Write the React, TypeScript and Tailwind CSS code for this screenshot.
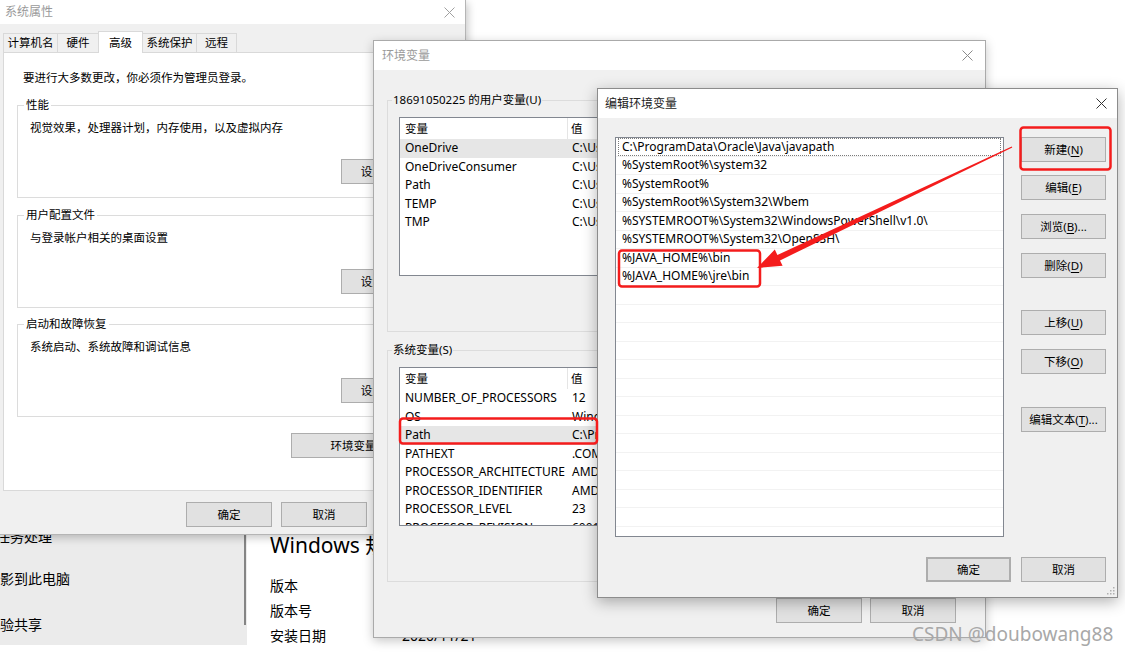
import React from "react";

const userVars: [string, string][] = [
  ["OneDrive", "C:\\Users\\18691\\OneDrive"],
  ["OneDriveConsumer", "C:\\Users\\18691\\OneDrive"],
  ["Path", "C:\\Users\\18691\\AppData\\Local"],
  ["TEMP", "C:\\Users\\18691\\AppData\\Local\\Temp"],
  ["TMP", "C:\\Users\\18691\\AppData\\Local\\Temp"],
];

const sysVars: [string, string][] = [
  ["NUMBER_OF_PROCESSORS", "12"],
  ["OS", "Windows_NT"],
  ["Path", "C:\\ProgramData\\Oracle\\Java"],
  ["PATHEXT", ".COM;.EXE;.BAT;.CMD"],
  ["PROCESSOR_ARCHITECTURE", "AMD64"],
  ["PROCESSOR_IDENTIFIER", "AMD64 Family 23"],
  ["PROCESSOR_LEVEL", "23"],
  ["PROCESSOR_REVISION", "6001"],
];

const paths = [
  "C:\\ProgramData\\Oracle\\Java\\javapath",
  "%SystemRoot%\\system32",
  "%SystemRoot%",
  "%SystemRoot%\\System32\\Wbem",
  "%SYSTEMROOT%\\System32\\WindowsPowerShell\\v1.0\\",
  "%SYSTEMROOT%\\System32\\OpenSSH\\",
  "%JAVA_HOME%\\bin",
  "%JAVA_HOME%\\jre\\bin",
];

function CloseX({ className }: { className: string }) {
  return (
    <svg width="11" height="11" viewBox="0 0 11 11" className={className}>
      <path d="M0.5 0.5L10.5 10.5M10.5 0.5L0.5 10.5" stroke="currentColor" strokeWidth="1" />
    </svg>
  );
}

function Btn({ children, className = "" }: { children: React.ReactNode; className?: string }) {
  return (
    <div
      className={`flex h-[25px] shrink-0 items-center justify-center border border-[#adadad] bg-[#e1e1e1] text-[11.5px] text-black ${className}`}
    >
      {children}
    </div>
  );
}

function U({ c }: { c: string }) {
  return <span className="underline underline-offset-2">{c}</span>;
}

// group box on the white tab page
function PageGroup({ label, text, mt }: { label: string; text: string; mt: string }) {
  return (
    <div className={`relative h-[93px] border border-[#dcdcdc] pl-[12px] pt-[14px] ${mt}`}>
      <span className="absolute -top-[9px] left-[6px] bg-white px-[2px] text-[11.5px] leading-[16px]">
        {label}
      </span>
      <div className="text-[11.5px] leading-[16px]">{text}</div>
      <Btn className="ml-[311px] mt-[23px] w-[85px]">设置(<U c="S" />)...</Btn>
    </div>
  );
}

function VarList({ rows, selected }: { rows: [string, string][]; selected: number }) {
  return (
    <div className="ml-[11px] mt-[16px] h-[159px] w-[560px] overflow-hidden border border-[#828790] bg-white text-[12px]">
      <div className="flex h-[21px] items-center">
        <div className="flex h-full w-[168px] items-center border-r border-[#e5e5e5] pl-[5px] text-[11.5px]">变量</div>
        <div className="pl-[3px] text-[11.5px]">值</div>
      </div>
      {rows.map(([k, v], i) => (
        <div key={k} className={`flex h-[18.5px] items-center ${i === selected ? "bg-[#e6e6e6]" : ""}`}>
          <div className="w-[169px] pl-[5px] whitespace-nowrap">{k}</div>
          <div className="pl-[3px] whitespace-nowrap">{v}</div>
        </div>
      ))}
    </div>
  );
}

function EnvGroup({ label, rows, selected, mt }: { label: string; rows: [string, string][]; selected: number; mt: string }) {
  return (
    <div className={`relative h-[232px] border border-[#dcdcdc] ${mt}`}>
      <span className="absolute -top-[9px] left-[4px] bg-[#f0f0f0] px-[1px] text-[11.5px] leading-[16px]">
        {label}
      </span>
      <VarList rows={rows} selected={selected} />
    </div>
  );
}

export default function App() {
  return (
    <div className="relative h-[654px] w-[1125px] overflow-hidden bg-white font-['Noto_Sans','Noto_Sans_CJK_SC',sans-serif] text-black">
      {/* BACKGROUND SETTINGS PAGE */}
      <div className="flex">
        <div className="flex h-[645px] w-[247px] bg-[#ebebeb]">
          <div className="flex w-[244px] flex-col text-[14px] leading-[20px]">
            <div className="-ml-[18px] mt-[527px] whitespace-nowrap">多任务处理</div>
            <div className="-ml-[14px] mt-[22px] whitespace-nowrap">投影到此电脑</div>
            <div className="-ml-[14px] mt-[26px] whitespace-nowrap">体验共享</div>
          </div>
          <div className="w-[2px]">
            <div className="mt-[535px] h-[90px] bg-[#858585]" />
          </div>
        </div>
        <div className="flex flex-col pl-[23px]">
          <div className="mt-[531px] text-[21px] leading-[28px] whitespace-nowrap">Windows 规格</div>
          <div className="mt-[17px] text-[14px] leading-[20px]">版本</div>
          <div className="mt-[5px] text-[14px] leading-[20px]">版本号</div>
          <div className="mt-[5px] flex text-[14px] leading-[20px]">
            <span className="w-[132px]">安装日期</span>
            <span>2020/11/21</span>
          </div>
        </div>
      </div>

      {/* 系统属性 */}
      <div className="absolute left-0 top-0 flex h-[535px] w-[466px] flex-col border-b border-r border-[#b5b5b5] bg-[#f0f0f0] shadow-[2px_3px_8px_rgba(0,0,0,0.22)]">
        <div className="flex h-[24px] shrink-0 items-center justify-between bg-white pl-[5px] pr-[10px]">
          <span className="text-[12px] text-[#9a9a9a]">系统属性</span>
          <CloseX className="text-[#a0a0a0]" />
        </div>
        <div className="mt-[7px] flex h-[21px] items-end pl-[3px] text-[11.5px]">
          <div className="flex h-[19px] w-[55px] items-center justify-center border border-b-0 border-[#d9d9d9]">计算机名</div>
          <div className="-ml-px flex h-[19px] w-[42px] items-center justify-center border border-b-0 border-[#d9d9d9]">硬件</div>
          <div className="relative z-10 -mb-px -ml-px flex h-[22px] w-[45px] items-start justify-center border border-b-0 border-[#d9d9d9] bg-white pt-[2px]">高级</div>
          <div className="-ml-px flex h-[19px] w-[55px] items-center justify-center border border-b-0 border-[#d9d9d9]">系统保护</div>
          <div className="-ml-px flex h-[19px] w-[41px] items-center justify-center border border-b-0 border-[#d9d9d9]">远程</div>
        </div>
        <div className="mx-[3px] h-[439px] shrink-0 border border-[#d9d9d9] bg-white px-[13px] pt-[17px]">
          <div className="ml-[6px] text-[11.5px] leading-[16px]">要进行大多数更改，你必须作为管理员登录。</div>
          <PageGroup label="性能" text="视觉效果，处理器计划，内存使用，以及虚拟内存" mt="mt-[19px]" />
          <PageGroup label="用户配置文件" text="与登录帐户相关的桌面设置" mt="mt-[17px]" />
          <PageGroup label="启动和故障恢复" text="系统启动、系统故障和调试信息" mt="mt-[16px]" />
          <Btn className="ml-[274px] mt-[16px] w-[150px]">环境变量(<U c="N" />)...</Btn>
        </div>
        <div className="mt-[11px] flex gap-[9px] pl-[186px]">
          <Btn className="w-[86px]">确定</Btn>
          <Btn className="w-[86px]">取消</Btn>
          <Btn className="w-[86px] text-[#888]">应用(A)</Btn>
        </div>
      </div>

      {/* 环境变量 */}
      <div className="absolute left-[373px] top-[40px] flex h-[598px] w-[613px] flex-col border border-[#aaaaaa] bg-[#f0f0f0] shadow-[0_3px_10px_rgba(0,0,0,0.22)]">
        <div className="flex h-[29px] shrink-0 items-center justify-between bg-white pl-[8px] pr-[12px]">
          <span className="text-[12px] text-[#9a9a9a]">环境变量</span>
          <CloseX className="text-[#8a8a8a]" />
        </div>
        <div className="flex flex-col px-[13px]">
          <EnvGroup label="18691050225 的用户变量(U)" rows={userVars} selected={0} mt="mt-[30px]" />
          <EnvGroup label="系统变量(S)" rows={sysVars} selected={2} mt="mt-[18px]" />
          <div className="ml-[389px] mt-[16px] flex gap-[8px]">
            <Btn className="w-[86px]">确定</Btn>
            <Btn className="w-[86px]">取消</Btn>
          </div>
        </div>
      </div>

      {/* 编辑环境变量 */}
      <div className="absolute left-[597px] top-[88px] flex h-[510px] w-[521px] flex-col border border-[#8c8c8c] bg-[#f0f0f0] shadow-[0_4px_14px_rgba(0,0,0,0.3)]">
        <div className="flex h-[29px] shrink-0 items-center justify-between bg-white pl-[7px] pr-[10px]">
          <span className="text-[12px] text-[#222]">编辑环境变量</span>
          <CloseX className="text-[#333]" />
        </div>
        <div className="flex pl-[17px] pt-[19px]">
          <div className="h-[400px] w-[389px] shrink-0 overflow-hidden border border-[#828790] bg-white text-[12px]">
            {Array.from({ length: 22 }).map((_, i) => (
              <div key={i} className="relative flex h-[18.5px] items-center border-b border-[#f2f2f2] pl-[6px] whitespace-nowrap">
                {i === 0 && <span className="absolute inset-x-[2px] inset-y-0 border border-dotted border-[#7a7a7a]" />}
                {paths[i] ?? ""}
              </div>
            ))}
          </div>
          <div className="ml-[17px] flex flex-col">
            <Btn className="w-[85px]">新建(<U c="N" />)</Btn>
            <Btn className="mt-[13px] w-[85px]">编辑(<U c="E" />)</Btn>
            <Btn className="mt-[14px] w-[85px]">浏览(<U c="B" />)...</Btn>
            <Btn className="mt-[14px] w-[85px]">删除(<U c="D" />)</Btn>
            <Btn className="mt-[32px] w-[85px]">上移(<U c="U" />)</Btn>
            <Btn className="mt-[14px] w-[85px]">下移(<U c="O" />)</Btn>
            <Btn className="mt-[33px] w-[85px]">编辑文本(<U c="T" />)...</Btn>
          </div>
        </div>
        <div className="mt-[20px] flex justify-end gap-[10px] pr-[11px]">
          <Btn className="w-[85px] border-2 border-[#0078d7]">确定</Btn>
          <Btn className="w-[85px]">取消</Btn>
        </div>
        <svg width="10" height="10" viewBox="0 0 10 10" className="absolute bottom-[2px] right-[2px]">
          <g fill="#b0b0b0">
            <rect x="8" y="2" width="1.5" height="1.5" />
            <rect x="5" y="5" width="1.5" height="1.5" />
            <rect x="8" y="5" width="1.5" height="1.5" />
            <rect x="2" y="8" width="1.5" height="1.5" />
            <rect x="5" y="8" width="1.5" height="1.5" />
            <rect x="8" y="8" width="1.5" height="1.5" />
          </g>
        </svg>
      </div>

      {/* RED ANNOTATIONS */}
      <svg width="1125" height="654" viewBox="0 0 1125 654" className="pointer-events-none absolute left-0 top-0">
        <g fill="none" stroke="#f41c1c" strokeWidth="2.5">
          <rect x="400" y="418.5" width="197" height="25" rx="3" />
          <rect x="619" y="250.5" width="141" height="36" rx="3" />
          <rect x="1020.5" y="127.5" width="90" height="42" rx="3" />
        </g>
        <polygon
          fill="#f41c1c"
          points="1012.3,147.5 780,260.4 782.6,265.8 757,268 774.8,249.6 777.4,255 1011.7,146.5"
        />
      </svg>

      {/* WATERMARK */}
      <div className="absolute left-[912px] top-[622px] text-[19px] leading-[24px] whitespace-nowrap text-[#a8a8a8]">
        CSDN @doubowang88
      </div>
    </div>
  );
}
